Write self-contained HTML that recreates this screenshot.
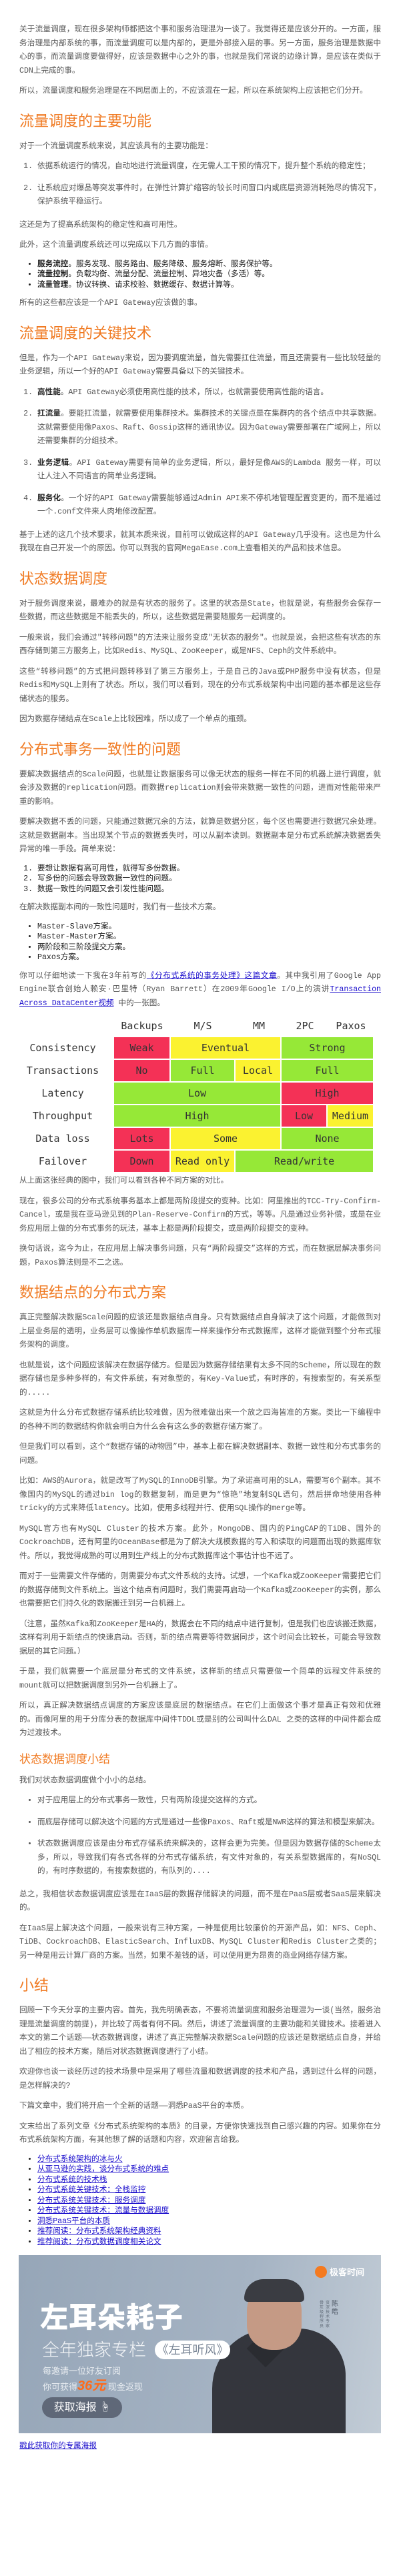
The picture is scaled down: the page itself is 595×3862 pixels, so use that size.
<!DOCTYPE html>
<html lang="zh-CN"><head><meta charset="utf-8">
<style>
html,body{margin:0;padding:0;background:#fff;}
body{width:595px;height:3862px;overflow:hidden;font-family:"Liberation Mono","Noto Sans CJK SC",monospace;font-size:11.6px;color:#555;}
.wrap{padding:35px 24px 0 29px;}
p{margin:0 0 10px;line-height:20.5px;text-align:justify;}
h2{font-family:"Liberation Sans","Noto Sans CJK SC",sans-serif;font-weight:normal;color:#f07a22;font-size:22px;line-height:28px;margin:20px 0 14px;}
h3{font-family:"Liberation Sans","Noto Sans CJK SC",sans-serif;font-weight:normal;color:#f07a22;font-size:17px;line-height:24px;margin:16px 0 10px;}
ol,ul{margin:0 0 10px;padding-left:27px;}
ol.sp li,ul.sp li{line-height:20.5px;margin-bottom:12px;text-align:justify;}
ol.sp li:last-child,ul.sp li:last-child{margin-bottom:14px;}
ul.tight li,ol.tight li{line-height:15.5px;color:#222;}
b{color:#222;}
a{color:#1a0dcc;text-decoration:underline;}
.tbl{position:relative;height:226px;margin:8px 0 10px;font-family:"DejaVu Sans Mono","Liberation Mono",monospace;color:#333;}
.tbl div{position:absolute;display:flex;align-items:center;justify-content:center;font-size:15px;}
.r{background:#f43156;}.y{background:#fbf230;}.g{background:#96e837;}
.lbl{left:6px;width:118px;}
.banner{position:relative;width:543px;height:267px;background:linear-gradient(100deg,#96a6b8 0%,#a5b3c3 60%,#c2ccd6 100%);overflow:hidden;margin:12px 0 10px -1px;font-family:"Liberation Sans","Noto Sans CJK SC",sans-serif;}
</style></head><body><div class="wrap">
<p>关于流量调度，现在很多架构师都把这个事和服务治理混为一谈了。我觉得还是应该分开的。一方面，服务治理是内部系统的事，而流量调度可以是内部的，更是外部接入层的事。另一方面，服务治理是数据中心的事，而流量调度要做得好，应该是数据中心之外的事，也就是我们常说的边缘计算，是应该在类似于CDN上完成的事。</p>
<p>所以，流量调度和服务治理是在不同层面上的，不应该混在一起，所以在系统架构上应该把它们分开。</p>
<h2>流量调度的主要功能</h2>
<p>对于一个流量调度系统来说，其应该具有的主要功能是：</p>
<ol class="sp"><li>依据系统运行的情况，自动地进行流量调度，在无需人工干预的情况下，提升整个系统的稳定性；</li><li>让系统应对爆品等突发事件时，在弹性计算扩缩容的较长时间窗口内或底层资源消耗殆尽的情况下，保护系统平稳运行。</li></ol>
<p>这还是为了提高系统架构的稳定性和高可用性。</p>
<p>此外，这个流量调度系统还可以完成以下几方面的事情。</p>
<ul class="tight"><li><b>服务流控</b>。服务发现、服务路由、服务降级、服务熔断、服务保护等。</li><li><b>流量控制</b>。负载均衡、流量分配、流量控制、异地灾备（多活）等。</li><li><b>流量管理</b>。协议转换、请求校验、数据缓存、数据计算等。</li></ul>
<p>所有的这些都应该是一个API Gateway应该做的事。</p>
<h2>流量调度的关键技术</h2>
<p>但是，作为一个API Gateway来说，因为要调度流量，首先需要扛住流量，而且还需要有一些比较轻量的业务逻辑，所以一个好的API Gateway需要具备以下的关键技术。</p>
<ol class="sp"><li><b>高性能</b>。API Gateway必须使用高性能的技术，所以，也就需要使用高性能的语言。</li><li><b>扛流量</b>。要能扛流量，就需要使用集群技术。集群技术的关键点是在集群内的各个结点中共享数据。这就需要使用像Paxos、Raft、Gossip这样的通讯协议。因为Gateway需要部署在广域网上，所以还需要集群的分组技术。</li><li><b>业务逻辑</b>。API Gateway需要有简单的业务逻辑，所以，最好是像AWS的Lambda 服务一样，可以让人注入不同语言的简单业务逻辑。</li><li><b>服务化</b>。一个好的API Gateway需要能够通过Admin API来不停机地管理配置变更的，而不是通过一个.conf文件来人肉地修改配置。</li></ol>
<p>基于上述的这几个技术要求，就其本质来说，目前可以做成这样的API Gateway几乎没有。这也是为什么我现在自己开发一个的原因。你可以到我的官网MegaEase.com上查看相关的产品和技术信息。</p>
<h2>状态数据调度</h2>
<p>对于服务调度来说，最难办的就是有状态的服务了。这里的状态是State，也就是说，有些服务会保存一些数据，而这些数据是不能丢失的，所以，这些数据是需要随服务一起调度的。</p>
<p>一般来说，我们会通过"转移问题"的方法来让服务变成"无状态的服务"。也就是说，会把这些有状态的东西存储到第三方服务上，比如Redis、MySQL、ZooKeeper，或是NFS、Ceph的文件系统中。</p>
<p>这些“转移问题”的方式把问题转移到了第三方服务上，于是自己的Java或PHP服务中没有状态，但是Redis和MySQL上则有了状态。所以，我们可以看到，现在的分布式系统架构中出问题的基本都是这些存储状态的服务。</p>
<p>因为数据存储结点在Scale上比较困难，所以成了一个单点的瓶颈。</p>
<h2>分布式事务一致性的问题</h2>
<p>要解决数据结点的Scale问题，也就是让数据服务可以像无状态的服务一样在不同的机器上进行调度，就会涉及数据的replication问题。而数据replication则会带来数据一致性的问题，进而对性能带来严重的影响。</p>
<p>要解决数据不丢的问题，只能通过数据冗余的方法，就算是数据分区，每个区也需要进行数据冗余处理。这就是数据副本。当出现某个节点的数据丢失时，可以从副本读到。数据副本是分布式系统解决数据丢失异常的唯一手段。简单来说：</p>
<ol class="tight"><li>要想让数据有高可用性，就得写多份数据。</li><li>写多份的问题会导致数据一致性的问题。</li><li>数据一致性的问题又会引发性能问题。</li></ol>
<p>在解决数据副本间的一致性问题时，我们有一些技术方案。</p>
<ul class="tight"><li>Master-Slave方案。</li><li>Master-Master方案。</li><li>两阶段和三阶段提交方案。</li><li>Paxos方案。</li></ul>
<p>你可以仔细地读一下我在3年前写的<a>《分布式系统的事务处理》这篇文章</a>。其中我引用了Google App Engine联合创始人赖安·巴里特（Ryan Barrett）在2009年Google I/O上的演讲<a>Transaction Across DataCenter视频</a> 中的一张图。</p>
<div class="tbl">
<div style="left:142px;top:0;width:84px;height:26px">Backups</div>
<div style="left:228px;top:0;width:94px;height:26px">M/S</div>
<div style="left:325px;top:0;width:68px;height:26px">MM</div>
<div style="left:394px;top:0;width:68px;height:26px">2PC</div>
<div style="left:463px;top:0;width:68px;height:26px">Paxos</div>
<div class="lbl" style="top:30px;height:32px">Consistency</div>
<div class="lbl" style="top:64px;height:32px">Transactions</div>
<div class="lbl" style="top:98px;height:32px">Latency</div>
<div class="lbl" style="top:132px;height:32px">Throughput</div>
<div class="lbl" style="top:166px;height:32px">Data loss</div>
<div class="lbl" style="top:200px;height:32px">Failover</div>
<div class="r" style="left:142px;top:30px;width:83px;height:32px">Weak</div>
<div class="y" style="left:227px;top:30px;width:164px;height:32px">Eventual</div>
<div class="g" style="left:393px;top:30px;width:137px;height:32px">Strong</div>
<div class="r" style="left:142px;top:64px;width:83px;height:32px">No</div>
<div class="g" style="left:227px;top:64px;width:95px;height:32px">Full</div>
<div class="y" style="left:324px;top:64px;width:67px;height:32px">Local</div>
<div class="g" style="left:393px;top:64px;width:137px;height:32px">Full</div>
<div class="g" style="left:142px;top:98px;width:249px;height:32px">Low</div>
<div class="r" style="left:393px;top:98px;width:137px;height:32px">High</div>
<div class="g" style="left:142px;top:132px;width:249px;height:32px">High</div>
<div class="r" style="left:393px;top:132px;width:67px;height:32px">Low</div>
<div class="y" style="left:462px;top:132px;width:68px;height:32px">Medium</div>
<div class="r" style="left:142px;top:166px;width:83px;height:32px">Lots</div>
<div class="y" style="left:227px;top:166px;width:164px;height:32px">Some</div>
<div class="g" style="left:393px;top:166px;width:137px;height:32px">None</div>
<div class="r" style="left:142px;top:200px;width:83px;height:32px">Down</div>
<div class="y" style="left:227px;top:200px;width:95px;height:32px">Read only</div>
<div class="g" style="left:324px;top:200px;width:206px;height:32px">Read/write</div>
</div>
<p>从上面这张经典的图中，我们可以看到各种不同方案的对比。</p>
<p>现在，很多公司的分布式系统事务基本上都是两阶段提交的变种。比如：阿里推出的TCC-Try-Confirm-Cancel，或是我在亚马逊见到的Plan-Reserve-Confirm的方式，等等。凡是通过业务补偿，或是在业务应用层上做的分布式事务的玩法，基本上都是两阶段提交，或是两阶段提交的变种。</p>
<p>换句话说，迄今为止，在应用层上解决事务问题，只有“两阶段提交”这样的方式，而在数据层解决事务问题，Paxos算法则是不二之选。</p>
<h2>数据结点的分布式方案</h2>
<p>真正完整解决数据Scale问题的应该还是数据结点自身。只有数据结点自身解决了这个问题，才能做到对上层业务层的透明，业务层可以像操作单机数据库一样来操作分布式数据库，这样才能做到整个分布式服务架构的调度。</p>
<p>也就是说，这个问题应该解决在数据存储方。但是因为数据存储结果有太多不同的Scheme，所以现在的数据存储也是多种多样的，有文件系统，有对象型的，有Key-Value式，有时序的，有搜索型的，有关系型的.....</p>
<p>这就是为什么分布式数据存储系统比较难做，因为很难做出来一个放之四海皆准的方案。类比一下编程中的各种不同的数据结构你就会明白为什么会有这么多的数据存储方案了。</p>
<p>但是我们可以看到，这个“数据存储的动物园”中，基本上都在解决数据副本、数据一致性和分布式事务的问题。</p>
<p>比如：AWS的Aurora，就是改写了MySQL的InnoDB引擎。为了承诺高可用的SLA，需要写6个副本。其不像国内的MySQL的通过bin log的数据复制，而是更为“惊艳”地复制SQL语句，然后拼命地使用各种tricky的方式来降低latency。比如，使用多线程并行、使用SQL操作的merge等。</p>
<p>MySQL官方也有MySQL Cluster的技术方案。此外，MongoDB、国内的PingCAP的TiDB、国外的CockroachDB，还有阿里的OceanBase都是为了解决大规模数据的写入和读取的问题而出现的数据库软件。所以，我觉得成熟的可以用到生产线上的分布式数据库这个事估计也不远了。</p>
<p>而对于一些需要文件存储的，则需要分布式文件系统的支持。试想，一个Kafka或ZooKeeper需要把它们的数据存储到文件系统上。当这个结点有问题时，我们需要再启动一个Kafka或ZooKeeper的实例，那么也需要把它们持久化的数据搬迁到另一台机器上。</p>
<p>（注意，虽然Kafka和ZooKeeper是HA的，数据会在不同的结点中进行复制，但是我们也应该搬迁数据，这样有利用于新结点的快速启动。否则，新的结点需要等待数据同步，这个时间会比较长，可能会导致数据层的其它问题。）</p>
<p>于是，我们就需要一个底层是分布式的文件系统，这样新的结点只需要做一个简单的远程文件系统的mount就可以把数据调度到另外一台机器上了。</p>
<p>所以，真正解决数据结点调度的方案应该是底层的数据结点。在它们上面做这个事才是真正有效和优雅的。而像阿里的用于分库分表的数据库中间件TDDL或是别的公司叫什么DAL 之类的这样的中间件都会成为过渡技术。</p>
<h3>状态数据调度小结</h3>
<p>我们对状态数据调度做个小小的总结。</p>
<ul class="sp"><li>对于应用层上的分布式事务一致性，只有两阶段提交这样的方式。</li><li>而底层存储可以解决这个问题的方式是通过一些像Paxos、Raft或是NWR这样的算法和模型来解决。</li><li>状态数据调度应该是由分布式存储系统来解决的，这样会更为完美。但是因为数据存储的Scheme太多，所以，导致我们有各式各样的分布式存储系统，有文件对象的，有关系型数据库的，有NoSQL的，有时序数据的，有搜索数据的，有队列的....</li></ul>
<p>总之，我相信状态数据调度应该是在IaaS层的数据存储解决的问题，而不是在PaaS层或者SaaS层来解决的。</p>
<p>在IaaS层上解决这个问题，一般来说有三种方案，一种是使用比较廉价的开源产品，如：NFS、Ceph、TiDB、CockroachDB、ElasticSearch、InfluxDB、MySQL Cluster和Redis Cluster之类的；另一种是用云计算厂商的方案。当然，如果不差钱的话，可以使用更为昂贵的商业网络存储方案。</p>
<h2>小结</h2>
<p>回顾一下今天分享的主要内容。首先，我先明确表态，不要将流量调度和服务治理混为一谈(当然，服务治理是流量调度的前提)，并比较了两者有何不同。然后，讲述了流量调度的主要功能和关键技术。接着进入本文的第二个话题——状态数据调度，讲述了真正完整解决数据Scale问题的应该还是数据结点自身，并给出了相应的技术方案，随后对状态数据调度进行了小结。</p>
<p>欢迎你也谈一谈经历过的技术场景中是采用了哪些流量和数据调度的技术和产品，遇到过什么样的问题，是怎样解决的?</p>
<p>下篇文章中，我们将开启一个全新的话题——洞悉PaaS平台的本质。</p>
<p>文末给出了系列文章《分布式系统架构的本质》的目录，方便你快速找到自己感兴趣的内容。如果你在分布式系统架构方面，有其他想了解的话题和内容，欢迎留言给我。</p>
<ul class="tight"><li><a>分布式系统架构的冰与火</a></li><li><a>从亚马逊的实践，谈分布式系统的难点</a></li><li><a>分布式系统的技术栈</a></li><li><a>分布式系统关键技术：全栈监控</a></li><li><a>分布式系统关键技术：服务调度</a></li><li><a>分布式系统关键技术：流量与数据调度</a></li><li><a>洞悉PaaS平台的本质</a></li><li><a>推荐阅读：分布式系统架构经典资料</a></li><li><a>推荐阅读：分布式数据调度相关论文</a></li></ul>
<div class="banner">
 <div style="position:absolute;left:290px;top:110px;width:200px;height:170px;background:#34363d;border-radius:90px 70px 0 0"></div>
 <div style="position:absolute;left:350px;top:120px;width:40px;height:40px;background:#2a2c31;transform:rotate(45deg)"></div>
 <div style="position:absolute;left:342px;top:42px;width:82px;height:100px;background:#c59a85;border-radius:42px 42px 38px 38px"></div>
 <div style="position:absolute;left:338px;top:36px;width:90px;height:34px;background:#3a3c42;border-radius:44px 44px 8px 8px"></div>
 <div style="position:absolute;right:25px;top:15px;color:#fff;font-size:13px;font-weight:bold;display:flex;align-items:center;gap:4px"><span style="display:inline-block;width:18px;height:18px;border-radius:50%;background:#f47a20"></span>极客时间</div>
 <div style="position:absolute;left:32px;top:70px;color:#fff;font-size:42px;font-weight:900;letter-spacing:1px;line-height:48px">左耳朵耗子</div>
 <div style="position:absolute;left:35px;top:126px;color:#f3f5f7;font-size:26px;font-weight:300;line-height:32px">全年独家专栏</div>
 <div style="position:absolute;left:204px;top:128px;width:113px;height:28px;border-radius:15px;background:#fff;color:#7a8696;font-size:18px;line-height:28px;text-align:center">《左耳听风》</div>
 <div style="position:absolute;left:36px;top:166px;color:#e9edf1;font-size:13px;line-height:16px">每邀请一位好友订阅</div>
 <div style="position:absolute;left:36px;top:186px;color:#e9edf1;font-size:13px;line-height:20px">你可获得<span style="color:#ff6a1a;font-size:20px;font-weight:bold;font-style:italic">36元</span> 现金返现</div>
 <div style="position:absolute;left:35px;top:213px;width:120px;height:31px;border-radius:16px;background:#5f6878;color:#fff;font-size:16px;line-height:31px;text-align:center">获取海报 ☝</div>
 <div style="position:absolute;left:451px;top:69px;color:#5f6a77;font-size:6px;line-height:7px;width:7px">骨灰级程序员</div>
 <div style="position:absolute;left:460px;top:69px;color:#5f6a77;font-size:6px;line-height:7px;width:7px">资深技术专家</div>
 <div style="position:absolute;left:469px;top:68px;color:#4b5563;font-size:10px;line-height:12px;width:10px">陈皓</div>
</div>
<p><a>戳此获取你的专属海报</a></p>
</div></body></html>
